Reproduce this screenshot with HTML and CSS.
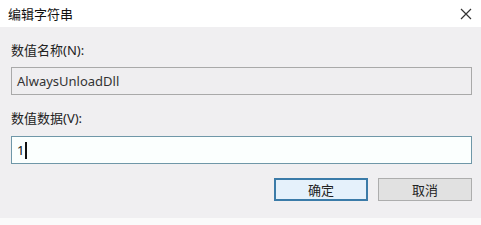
FILE: index.html
```html
<!DOCTYPE html>
<html lang="zh-CN">
<head>
    <meta charset="UTF-8">
    <title>编辑字符串</title>
    <link rel="stylesheet" href="styles.css">
</head>
<body>
    <div class="dialog">
        <div class="titlebar">
            <span class="title">编辑字符串</span>
            <span class="close">
                <svg width="12" height="12" viewBox="0 0 12 12">
                    <path d="M1 1 L11 11 M11 1 L1 11" stroke="#333" stroke-width="1.2" fill="none"/>
                </svg>
            </span>
        </div>
        <div class="body">
            <label class="field-label">数值名称(N):</label>
            <div class="field readonly">AlwaysUnloadDll</div>
            <label class="field-label">数值数据(V):</label>
            <div class="field active">1<span class="caret"></span></div>
            <div class="buttons">
                <button class="btn default">确定</button>
                <button class="btn">取消</button>
            </div>
        </div>
        <div class="footer"></div>
    </div>
</body>
</html>
```

FILE: styles.css
```css
body {
    margin: 0;
    background-color: #f0eff1;
    font-family: "Noto Sans", "Noto Sans CJK SC", sans-serif;
    color: #222;
}

.dialog {
    width: 481px;
    height: 225px;
    display: flex;
    flex-direction: column;
}

.titlebar {
    height: 27px;
    background-color: #fff;
    display: flex;
    align-items: center;
    justify-content: space-between;
    padding: 0 9px 0 8px;
}

.title {
    font-size: 13px;
    color: #111;
}

.close {
    display: flex;
    width: 12px;
    height: 12px;
}

.body {
    flex: 1;
    padding: 14px 9px 0 11px;
    display: flex;
    flex-direction: column;
}

.field-label {
    font-size: 13px;
    line-height: 18px;
    color: #222;
}

.field {
    height: 26px;
    box-sizing: content-box;
    font-size: 13px;
    line-height: 26px;
    padding-left: 5px;
    display: flex;
    align-items: center;
}

.field.readonly {
    margin-top: 8px;
    margin-bottom: 14px;
    background-color: #efeef0;
    border: 1px solid #a9a9a9;
    color: #333;
}

.field.active {
    margin-top: 9px;
    background-color: #fbfffe;
    border: 1px solid #6f97a8;
    color: #111;
}

.caret {
    display: inline-block;
    width: 2px;
    height: 17px;
    background-color: #111;
    margin-left: 1px;
}

.buttons {
    display: flex;
    justify-content: flex-end;
    gap: 10px;
    margin-top: 14px;
}

.btn {
    width: 94px;
    height: 23px;
    font-family: "Noto Sans CJK SC", sans-serif;
    font-size: 13px;
    color: #222;
    background-color: #e1e1e1;
    border: 1px solid #adadad;
    padding: 0;
}

.btn.default {
    background-color: #e5f1fb;
    border: 2px solid #3b7ba8;
}

.footer {
    height: 7px;
    background-color: #fafafa;
}
```
